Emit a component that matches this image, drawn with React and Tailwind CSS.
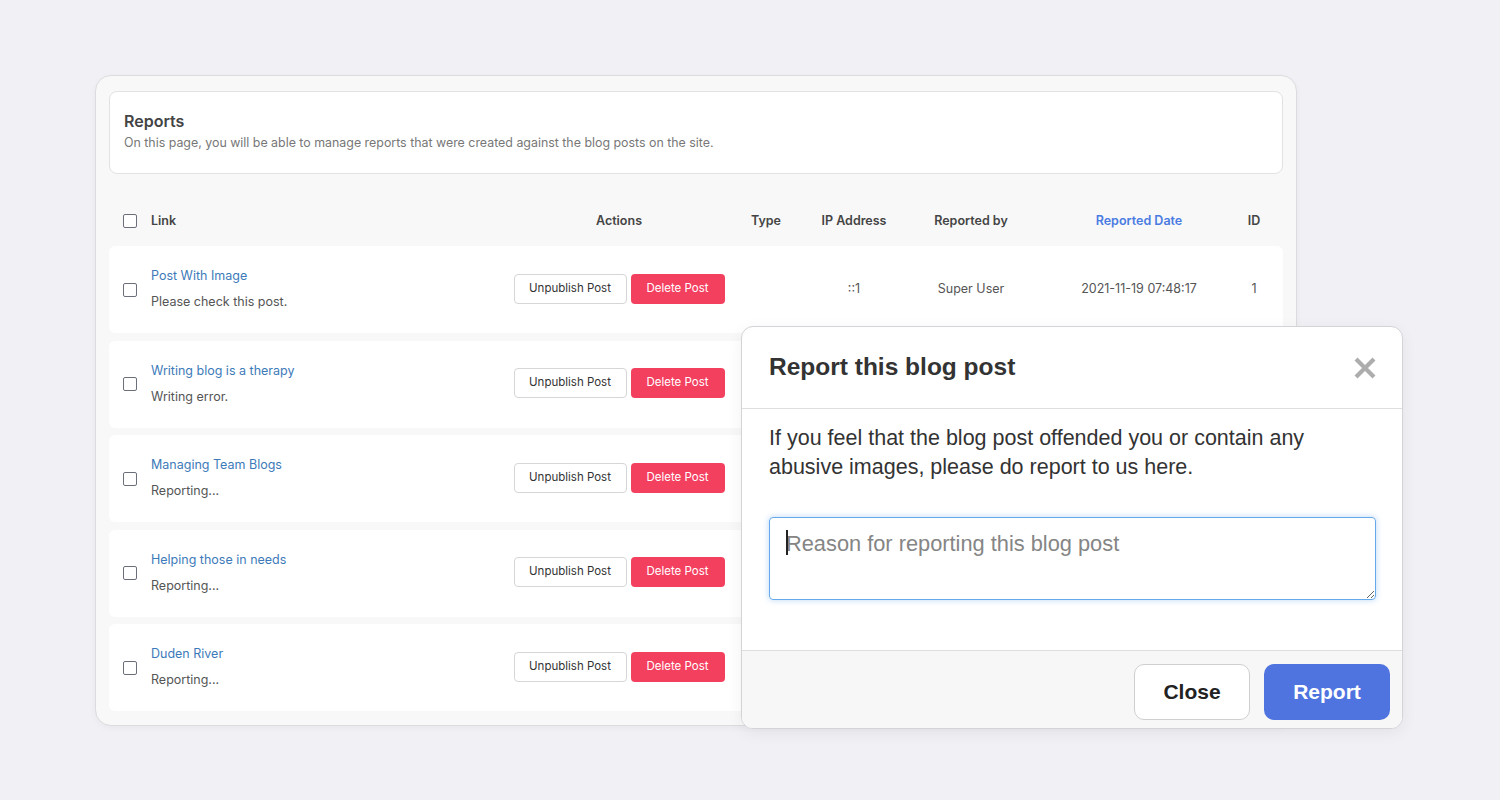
import { useState } from 'react'

const rows = [
  { title: 'Post With Image', note: 'Please check this post.', ip: '::1', by: 'Super User', date: '2021-11-19 07:48:17', id: '1' },
  { title: 'Writing blog is a therapy', note: 'Writing error.' },
  { title: 'Managing Team Blogs', note: 'Reporting...' },
  { title: 'Helping those in needs', note: 'Reporting...' },
  { title: 'Duden River', note: 'Reporting...' },
]

const Box = () => (
  <span className="block w-[14px] h-[14px] shrink-0 border border-[#6b6f7a] rounded-[2px] bg-white" />
)

const ReportRow = ({ row }) => (
  <div className="flex items-center h-[87px] bg-white rounded-[6px] pl-[14px] text-[12.5px] text-[#555]">
    <Box />
    <div className="w-[348px] ml-[14px] flex flex-col gap-[7px]">
      <span className="text-[#3d7ab9]">{row.title}</span>
      <span>{row.note}</span>
    </div>
    <div className="w-[240px] flex justify-center gap-[4px] -mt-[2px]">
      <button className="h-[30px] w-[113px] rounded-[4px] border border-[#d6d6d6] bg-white text-[11.5px] text-[#333]">
        Unpublish Post
      </button>
      <button className="h-[30px] w-[94px] rounded-[4px] bg-[#f4405f] text-[11.5px] text-white">
        Delete Post
      </button>
    </div>
    <div className="w-[54px]" />
    <div className="w-[122px] text-center">{row.ip}</div>
    <div className="w-[112px] text-center">{row.by}</div>
    <div className="w-[180px] ml-[22px] text-center">{row.date}</div>
    <div className="w-[50px] text-center">{row.id}</div>
  </div>
)

export default function App() {
  const [reason, setReason] = useState('')

  return (
    <div className="min-h-[800px] w-full bg-[#f1f1f5] relative font-['Inter','Liberation_Sans',sans-serif]">
      <div className="pt-[75px] pl-[95px]">
        {/* reports card */}
        <div className="w-[1202px] h-[651px] bg-[#f8f8f8] border border-[#dcdcdf] rounded-[16px] px-[13px] pt-[15px] shadow-[0_2px_6px_rgba(0,0,0,0.04)]">
          <div className="h-[83px] bg-white border border-[#e2e2e4] rounded-[8px] px-[14px] pt-[17px]">
            <p className="text-[16px] font-semibold text-[#444]">Reports</p>
            <p className="text-[12.4px] text-[#777] mt-[1px]">
              On this page, you will be able to manage reports that were created against the blog posts on the site.
            </p>
          </div>

          <div className="flex items-center h-[40px] mt-[27px] pl-[14px] text-[12.5px] font-semibold text-[#444]">
            <Box />
            <div className="w-[348px] ml-[14px]">Link</div>
            <div className="w-[240px] text-center">Actions</div>
            <div className="w-[54px] text-center">Type</div>
            <div className="w-[122px] text-center">IP Address</div>
            <div className="w-[112px] text-center">Reported by</div>
            <div className="w-[180px] ml-[22px] text-center text-[#4a7be2]">Reported Date</div>
            <div className="w-[50px] text-center">ID</div>
          </div>

          <div className="flex flex-col gap-[7.5px] mt-[5px]">
            {rows.map((row) => (
              <ReportRow key={row.title} row={row} />
            ))}
          </div>
        </div>
      </div>

      {/* report modal */}
      <div className="absolute left-[741px] top-[326px] w-[662px] h-[403px] bg-white border border-[#d4d4d8] rounded-[12px] overflow-hidden flex flex-col font-['Liberation_Sans','Helvetica',sans-serif] shadow-[0_4px_16px_rgba(0,0,0,0.06)]">
        <div className="h-[82px] shrink-0 flex items-center justify-between pl-[27px] pr-[26px] border-b border-[#dedede]">
          <h2 className="text-[24.5px] font-bold text-[#333]">Report this blog post</h2>
          <svg width="22" height="22" viewBox="0 0 22 22" className="mt-[1px]">
            <path d="M3.5 3.5 L18.5 18.5 M18.5 3.5 L3.5 18.5" stroke="#adadad" strokeWidth="4.2" strokeLinecap="square" />
          </svg>
        </div>
        <div className="flex-1 px-[27px] pt-[15px]">
          <p className="text-[21.5px] leading-[29px] text-[#333] pr-[50px]">
            If you feel that the blog post offended you or contain any abusive images, please do report to us here.
          </p>
          <div className="relative mt-[35px]">
            <textarea
              value={reason}
              onChange={(e) => setReason(e.target.value)}
              placeholder="Reason for reporting this blog post"
              className="block w-[607px] h-[83px] border border-[#66a9eb] rounded-[4px] px-[16px] py-[10px] text-[21.8px] text-[#333] placeholder:text-[#858585] outline-none shadow-[0_0_6px_rgba(102,169,235,0.45)]"
            />
            <span className="absolute left-[17px] top-[13px] w-[1.5px] h-[25px] bg-[#222]" />
          </div>
        </div>
        <div className="h-[78px] shrink-0 bg-[#f7f7f7] border-t border-[#dedede] flex justify-end gap-[14px] pr-[12px] pt-[13px]">
          <button className="h-[56px] w-[116px] rounded-[10px] border border-[#cfcfcf] bg-white text-[21px] font-bold text-[#222]">
            Close
          </button>
          <button className="h-[56px] w-[126px] rounded-[10px] bg-[#4f74e0] text-[21px] font-bold text-white">
            Report
          </button>
        </div>
      </div>
    </div>
  )
}
